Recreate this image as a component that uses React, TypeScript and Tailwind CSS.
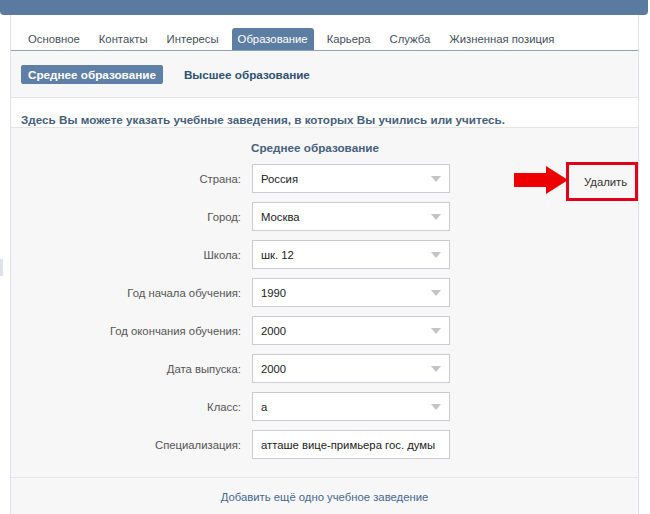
const rows: { label: string; value: string; select: boolean }[] = [
  { label: 'Страна:', value: 'Россия', select: true },
  { label: 'Город:', value: 'Москва', select: true },
  { label: 'Школа:', value: 'шк. 12', select: true },
  { label: 'Год начала обучения:', value: '1990', select: true },
  { label: 'Год окончания обучения:', value: '2000', select: true },
  { label: 'Дата выпуска:', value: '2000', select: true },
  { label: 'Класс:', value: 'а', select: true },
  { label: 'Специализация:', value: 'атташе вице-примьера гос. думы', select: false },
];

const tabs = ['Основное', 'Контакты', 'Интересы', 'Образование', 'Карьера', 'Служба', 'Жизненная позиция'];

export default function App() {
  return (
    <div className="relative w-[650px] h-[514px] overflow-hidden bg-white font-['Liberation_Sans',Arial,sans-serif] text-[11.3px] leading-[14px] text-[#333]">
      {/* top bar */}
      <div className="h-[15px] w-[648px] bg-[#5a7aa0] rounded-b-[4px]" />

      {/* side bit on the left */}
      <div className="absolute left-0 top-[259px] w-[3px] h-[17px] bg-[#dbe3ec]" />

      <div className="ml-[10px] w-[629px] border-x border-[#dfe2e6]">
        {/* tabs */}
        <div className="flex items-end gap-[7px] pl-[11px] pt-[13px] border-b border-[#8ea1b6]">
          {tabs.map((t) => (
            <div
              key={t}
              className={
                t === 'Образование'
                  ? 'h-[22px] px-[6px] flex items-center rounded-t-[3px] bg-[#5d7ea3] text-white'
                  : 'h-[22px] px-[6px] flex items-center text-[#45505c]'
              }
            >
              {t}
            </div>
          ))}
        </div>

        {/* sub tabs */}
        <div className="h-[47px] bg-[#f7f7f7] border-b border-[#e3e5e8] flex items-center gap-[21px] pl-[10px] pt-[1px]">
          <div className="h-[19px] px-[7px] flex items-center rounded-[2px] bg-[#5f80a6] text-white font-bold text-[11.7px]">
            Среднее образование
          </div>
          <div className="font-bold text-[11.7px] text-[#2f4f73]">Высшее образование</div>
        </div>

        {/* hint */}
        <div className="h-[30px] flex items-end pb-0 pl-[10px] border-b border-[#e3e5e8] font-bold text-[11.7px] text-[#46607c]">
          Здесь Вы можете указать учебные заведения, в которых Вы учились или учитесь.
        </div>

        {/* form */}
        <div className="relative bg-[#f7f7f7] h-[350px] border-b border-[#e3e5e8]">
          <div className="pt-[13px] pl-[240px] font-bold text-[11.7px] text-[#46607c]">Среднее образование</div>

          <div className="mt-[9px] flex flex-col gap-[9px]">
            {rows.map((r) => (
              <div key={r.label} className="flex items-center">
                <div className="w-[230px] text-right text-[#555]">{r.label}</div>
                <div className="ml-[11px] w-[198px] h-[29px] bg-white border border-[#c9cdd2] flex items-center justify-between pl-[8px] pr-[8px] text-[#222] whitespace-nowrap">
                  <span>{r.value}</span>
                  {r.select && (
                    <svg width="10" height="6" viewBox="0 0 10 6">
                      <path d="M0 0H10L5 6Z" fill="#c2c4c7" />
                    </svg>
                  )}
                </div>
              </div>
            ))}
          </div>

          {/* arrow + delete */}
          <svg className="absolute left-[503px] top-[38px]" width="54" height="28" viewBox="0 0 54 28">
            <path d="M0 7H32V0L54 14L32 28V21H0Z" fill="#ee0000" />
          </svg>
          <div className="absolute left-[555px] top-[34px] w-[72px] h-[39px] border-[3px] border-[#e0001a] flex items-center pl-[15px] text-[#333]">
            Удалить
          </div>
        </div>

        {/* footer */}
        <div className="h-[40px] bg-[#f7f7f7] flex justify-center pt-[12px] text-[#45688e]">
          Добавить ещё одно учебное заведение
        </div>
      </div>
    </div>
  );
}
